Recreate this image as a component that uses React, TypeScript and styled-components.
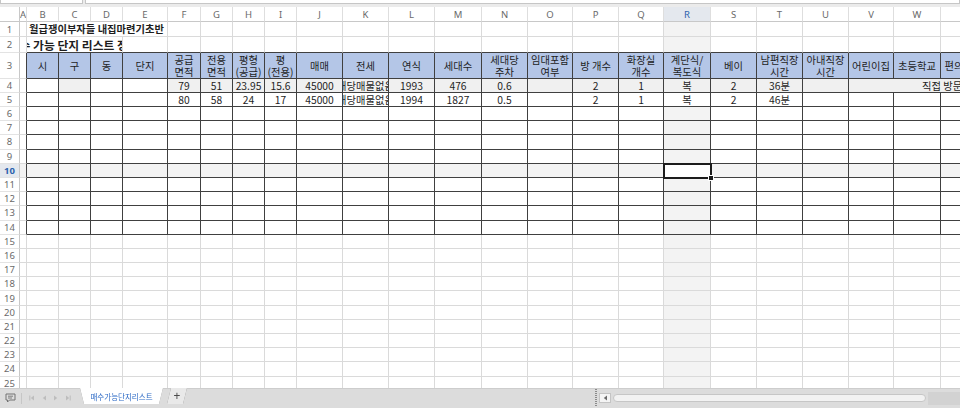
import React from "react";
import styled, { createGlobalStyle, css } from "styled-components";

const GlobalStyle = createGlobalStyle`
  html, body {
    margin: 0;
    padding: 0;
    background: #fff;
  }
  body {
    width: 960px;
    height: 408px;
    overflow: hidden;
    font-family: "Noto Sans CJK KR", "Noto Sans", sans-serif;
  }
`;

type Align = "left" | "center";

const COLUMNS: { key: string; width: number }[] = [
  { key: "A", width: 7 },
  { key: "B", width: 32 },
  { key: "C", width: 32 },
  { key: "D", width: 32 },
  { key: "E", width: 45 },
  { key: "F", width: 33 },
  { key: "G", width: 32 },
  { key: "H", width: 32 },
  { key: "I", width: 32 },
  { key: "J", width: 46 },
  { key: "K", width: 46 },
  { key: "L", width: 46 },
  { key: "M", width: 47 },
  { key: "N", width: 46 },
  { key: "O", width: 45 },
  { key: "P", width: 46 },
  { key: "Q", width: 45 },
  { key: "R", width: 47 },
  { key: "S", width: 46 },
  { key: "T", width: 46 },
  { key: "U", width: 46 },
  { key: "V", width: 45 },
  { key: "W", width: 47 },
  { key: "X", width: 46 },
];

const HEADERS: Record<string, string> = {
  B: "시",
  C: "구",
  D: "동",
  E: "단지",
  F: "공급\n면적",
  G: "전용\n면적",
  H: "평형\n(공급)",
  I: "평\n(전용)",
  J: "매매",
  K: "전세",
  L: "연식",
  M: "세대수",
  N: "세대당\n주차",
  O: "임대포함\n여부",
  P: "방 개수",
  Q: "화장실\n개수",
  R: "계단식/\n복도식",
  S: "베이",
  T: "남편직장\n시간",
  U: "아내직장\n시간",
  V: "어린이집",
  W: "초등학교",
  X: "편의시설",
};

const DATA: Record<number, Record<string, string>> = {
  4: {
    F: "79", G: "51", H: "23.95", I: "15.6", J: "45000", K: "해당매물없음",
    L: "1993", M: "476", N: "0.6", P: "2", Q: "1", R: "복", S: "2", T: "36분",
  },
  5: {
    F: "80", G: "58", H: "24", I: "17", J: "45000", K: "해당매물없음",
    L: "1994", M: "1827", N: "0.5", P: "2", Q: "1", R: "복", S: "2", T: "46분",
  },
};

// merged / overflowing cells: key -> number of columns
const SPANS: Record<string, number> = { B1: 4, B2: 3, V4: 3 };

const ROW_COUNT = 25;
const ACTIVE_ROW = 10;
const ACTIVE_COL = "R";

const GRID = "#dadada";
const DARK = "#404040";
const HEADER_BLUE = "#b4c6e7";
const ROW4_FILL = "#f0f0f0";
const FOCUS_FILL = "#f3f3f3";

const Window = styled.div`
  width: 960px;
  height: 408px;
  display: flex;
  flex-direction: column;
  overflow: hidden;
  background: #fff;
`;

const FormulaStrip = styled.div`
  height: 7px;
  flex: none;
  display: flex;
  gap: 2px;
  align-items: flex-start;
  background: #ebebeb;
`;

const InputBox = styled.div<{ $grow?: boolean }>`
  height: 3px;
  width: ${(p) => (p.$grow ? "auto" : "81px")};
  flex: ${(p) => (p.$grow ? 1 : "none")};
  background: #fff;
  border: 1px solid #c6c6c6;
  border-top: none;
`;

const Sheet = styled.div`
  flex: 1;
  min-height: 0;
  overflow: hidden;
  display: grid;
  grid-template-columns: 20px ${COLUMNS.map((c) => `${c.width}px`).join(" ")};
  grid-template-rows: 15px 15px 16px 26px 14px 14px repeat(20, 14.2px);
  width: max-content;
`;

const Corner = styled.div`
  background: #fff;
  border-right: 1px solid #c8c8c8;
  border-bottom: 1px solid #c8c8c8;
`;

const ColHead = styled.div<{ $active?: boolean }>`
  display: flex;
  align-items: center;
  justify-content: center;
  overflow: hidden;
  font-family: "Noto Sans", sans-serif;
  font-size: 9.5px;
  color: ${(p) => (p.$active ? "#2b62ad" : "#6a6a6a")};
  background: ${(p) => (p.$active ? "#e4e8ee" : "#fff")};
  border-right: 1px solid #dedede;
  border-bottom: 1px solid #c8c8c8;
`;

const RowHead = styled.div<{ $active?: boolean }>`
  display: flex;
  align-items: center;
  justify-content: center;
  font-family: "Noto Sans", sans-serif;
  font-size: 9.5px;
  font-weight: ${(p) => (p.$active ? 700 : 400)};
  color: ${(p) => (p.$active ? "#2b62ad" : "#6a6a6a")};
  background: ${(p) => (p.$active ? "#e4e8ee" : "#fff")};
  border-right: 1px solid #c8c8c8;
  border-bottom: 1px solid #e3e3e3;
`;

const Cell = styled.div<{
  $span: number;
  $fill: string;
  $right: string;
  $bottom: string;
  $align: Align;
  $selected?: boolean;
}>`
  grid-column: span ${(p) => p.$span};
  min-width: 0;
  position: relative;
  display: flex;
  align-items: center;
  justify-content: ${(p) => (p.$align === "left" ? "flex-start" : "center")};
  overflow: hidden;
  white-space: pre;
  text-align: center;
  font-size: 10.3px;
  line-height: 12px;
  color: #1e1e1e;
  background: ${(p) => p.$fill};
  border-right: 1px solid ${(p) => p.$right};
  border-bottom: 1px solid ${(p) => p.$bottom};
  ${(p) =>
    p.$selected &&
    css`
      overflow: visible;
      z-index: 2;
      outline: 2px solid #1c1c1c;
      outline-offset: -1px;
      &::after {
        content: "";
        position: absolute;
        right: -4px;
        bottom: -4px;
        width: 4px;
        height: 4px;
        background: #1c1c1c;
        border: 1px solid #fff;
      }
    `}
`;

const SheetTitle = styled.span`
  padding-left: 2px;
  font-weight: 700;
  font-size: 10.3px;
`;

const ListTitle = styled.span`
  margin-left: -18.3px;
  font-weight: 700;
  font-size: 11.8px;
`;

const MemoText = styled.span`
  padding-left: 73px;
`;

const TabBar = styled.div`
  height: 20px;
  flex: none;
  display: flex;
  align-items: flex-start;
  background: #dcdcdc;
  box-shadow: inset 0 1px 0 #cdcdcd;
`;

const NavGroup = styled.div`
  width: 80px;
  height: 100%;
  flex: none;
  display: flex;
  align-items: center;
  color: #bdbdbd;
`;

const NoteButton = styled.div`
  width: 22px;
  height: 11px;
  display: flex;
  align-items: center;
  justify-content: center;
  color: #727272;
  border-right: 1px solid #c6c6c6;
  box-sizing: border-box;
`;

const NavArrows = styled.div`
  flex: 1;
  display: flex;
  justify-content: space-around;
  padding: 0 6px 0 4px;
`;

const TabOutline = styled.div`
  flex: none;
  filter: drop-shadow(0 0 0.6px #7d7d7d);
`;

const SheetTab = styled.div`
  width: 83px;
  height: 16px;
  background: #fff;
  clip-path: polygon(0 0, 100% 0, calc(100% - 4px) 100%, 4px 100%);
  display: flex;
  align-items: center;
  justify-content: center;
  font-size: 7.5px;
  color: #2e6bc6;
`;

const AddTab = styled.div`
  width: 20px;
  height: 16px;
  margin-left: 4px;
  background: #e9e9e9;
  clip-path: polygon(4px 0, 100% 0, calc(100% - 4px) 100%, 0 100%);
  display: flex;
  align-items: center;
  justify-content: center;
  font-family: "Noto Sans", sans-serif;
  font-size: 12px;
  line-height: 1;
  color: #4a4a4a;
`;

const Spacer = styled.div`
  flex: 1;
`;

const ScrollArea = styled.div`
  width: 365px;
  height: 100%;
  flex: none;
  display: flex;
  align-items: center;
`;

const Splitter = styled.div`
  width: 2px;
  height: 18px;
  margin-right: 2px;
  background: repeating-linear-gradient(#8a8a8a 0 1px, transparent 1px 2px);
`;

const ArrowButton = styled.div`
  width: 12px;
  height: 10px;
  box-sizing: border-box;
  border: 1px solid #c4c4c4;
  background: #f4f4f4;
  display: flex;
  align-items: center;
  justify-content: center;
  color: #6a6a6a;
`;

const Thumb = styled.div`
  width: 313px;
  height: 8px;
  margin-left: 2px;
  box-sizing: border-box;
  border: 1px solid #c6c6c6;
  border-radius: 4px;
  background: #f2f2f2;
`;

const Track = styled.div`
  flex: 1;
  height: 13px;
  margin-left: 2px;
  background: #d2d2d2;
`;

const Tri = ({ dir, bar }: { dir: "left" | "right"; bar?: boolean }) => (
  <svg width="6" height="6" viewBox="0 0 6 6">
    {dir === "left" ? (
      <path d="M5 0.5 L1.8 3 L5 5.5 Z" fill="currentColor" />
    ) : (
      <path d="M1 0.5 L4.2 3 L1 5.5 Z" fill="currentColor" />
    )}
    {bar && (dir === "left" ? (
      <rect x="0.3" y="0.5" width="1" height="5" fill="currentColor" />
    ) : (
      <rect x="4.7" y="0.5" width="1" height="5" fill="currentColor" />
    ))}
  </svg>
);

const NoteIcon = () => (
  <svg width="11" height="10" viewBox="0 0 11 10">
    <path
      d="M1 1 H10 V7 H4.5 L2.5 9 V7 H1 Z"
      fill="none"
      stroke="currentColor"
      strokeWidth="1"
      strokeLinejoin="round"
    />
    <path d="M3 3.2 H8 M3 5 H7" stroke="currentColor" strokeWidth="0.9" />
  </svg>
);

const cellFill = (r: number, c: string, inTable: boolean): string => {
  const hasValue = Boolean(DATA[r]?.[c]);
  if (r === 3 && inTable) return HEADER_BLUE;
  if (r === 4 && inTable) return ["B", "D", "E"].includes(c) ? "#fff" : ROW4_FILL;
  if (r === ACTIVE_ROW && c === ACTIVE_COL) return "#fff";
  if (r === ACTIVE_ROW) return FOCUS_FILL;
  if (c === ACTIVE_COL && !hasValue) return FOCUS_FILL;
  return "#fff";
};

const cellContent = (r: number, c: string): React.ReactNode => {
  if (r === 1 && c === "B") return <SheetTitle>월급쟁이부자들 내집마련기초반</SheetTitle>;
  if (r === 2 && c === "B") return <ListTitle>매수 가능 단지 리스트 정리</ListTitle>;
  if (r === 3) return HEADERS[c] ?? "";
  if (r === 4 && c === "V") return <MemoText>직접 방문</MemoText>;
  return DATA[r]?.[c] ?? "";
};

const buildRow = (r: number) => {
  const out: React.ReactNode[] = [
    <RowHead key={`h${r}`} $active={r === ACTIVE_ROW}>
      {r}
    </RowHead>,
  ];
  let skip = 0;
  COLUMNS.forEach(({ key: c }) => {
    if (skip > 0) {
      skip -= 1;
      return;
    }
    const span = SPANS[`${c}${r}`] ?? 1;
    skip = span - 1;
    const inTable = c !== "A" && r >= 3 && r <= 14;
    const right = inTable || (c === "A" && r >= 3 && r <= 14) ? DARK : GRID;
    const bottom = inTable || (r === 2 && c !== "A") ? DARK : GRID;
    const left = (r <= 2 && c === "B") || (r === 4 && c === "V");
    out.push(
      <Cell
        key={`${c}${r}`}
        $span={span}
        $fill={cellFill(r, c, inTable)}
        $right={right}
        $bottom={bottom}
        $align={left ? "left" : "center"}
        $selected={r === ACTIVE_ROW && c === ACTIVE_COL}
      >
        {cellContent(r, c)}
      </Cell>
    );
  });
  return out;
};

export default function App() {
  const rows = Array.from({ length: ROW_COUNT }, (_, i) => i + 1);
  return (
    <>
      <GlobalStyle />
      <Window>
        <FormulaStrip>
          <InputBox />
          <InputBox $grow />
        </FormulaStrip>
        <Sheet>
          <Corner />
          {COLUMNS.map((c) => (
            <ColHead key={c.key} $active={c.key === ACTIVE_COL}>
              {c.key}
            </ColHead>
          ))}
          {rows.map((r) => buildRow(r))}
        </Sheet>
        <TabBar>
          <NavGroup>
            <NoteButton>
              <NoteIcon />
            </NoteButton>
            <NavArrows>
              <Tri dir="left" bar />
              <Tri dir="left" />
              <Tri dir="right" />
              <Tri dir="right" bar />
            </NavArrows>
          </NavGroup>
          <TabOutline>
            <SheetTab>매수가능단지리스트</SheetTab>
          </TabOutline>
          <TabOutline>
            <AddTab>+</AddTab>
          </TabOutline>
          <Spacer />
          <ScrollArea>
            <Splitter />
            <ArrowButton>
              <Tri dir="left" />
            </ArrowButton>
            <Thumb />
            <Track />
          </ScrollArea>
        </TabBar>
      </Window>
    </>
  );
}
